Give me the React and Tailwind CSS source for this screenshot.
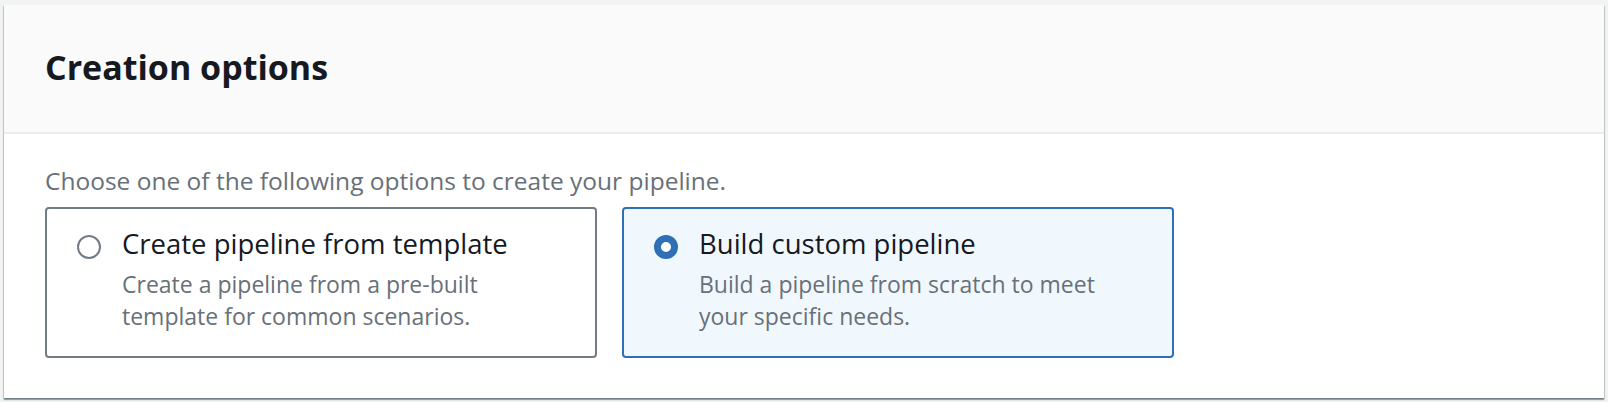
export default function App() {
  return (
    <div className="w-[1608px] h-[402px] bg-[#f2f3f3] pt-[5px] pl-[4px] pr-[4px] font-['Open_Sans',sans-serif]">
      <div className="h-[393px] bg-white flex flex-col shadow-[0_2px_1px_0_rgba(0,28,36,0.35),1px_1px_1px_0_rgba(0,28,36,0.15),-1px_1px_1px_0_rgba(0,28,36,0.15)]">
        <div className="h-[129px] bg-[#fafafa] border-b-2 border-[#eaeded] flex items-center pl-[41px] pb-[3px]">
          <h2 className="text-[34px] leading-[44px] font-bold text-[#16191f]">Creation options</h2>
        </div>
        <div className="pl-[41px] pt-[32px]">
          <p className="text-[24.5px] leading-[30px] text-[#687078]">
            Choose one of the following options to create your pipeline.
          </p>
          <div className="flex gap-[25px] mt-[11px]">
            <Option
              selected={false}
              title="Create pipeline from template"
              lines={["Create a pipeline from a pre-built", "template for common scenarios."]}
            />
            <Option
              selected={true}
              title="Build custom pipeline"
              lines={["Build a pipeline from scratch to meet", "your specific needs."]}
            />
          </div>
        </div>
      </div>
    </div>
  );
}

function Option({ selected, title, lines }) {
  return (
    <div
      className={
        selected
          ? "w-[552px] h-[151px] rounded-[4px] border-2 border-[#2f6fb5] bg-[#f1f8fd] flex pl-[30px] pt-[18px]"
          : "w-[552px] h-[151px] rounded-[4px] border-2 border-[#737c85] bg-white flex pl-[30px] pt-[18px]"
      }
    >
      <div className="pt-[8px]">
        {selected ? (
          <div className="w-[24px] h-[24px] rounded-full border-[7px] border-[#2f6fb5] bg-white" />
        ) : (
          <div className="w-[24px] h-[24px] rounded-full border-2 border-[#737c85] bg-white" />
        )}
      </div>
      <div className="ml-[21px]">
        <div className="text-[27.5px] leading-[34px] text-[#16191f]">{title}</div>
        <div className="mt-[7px] text-[23px] leading-[32px] text-[#687078]">
          {lines.map((l) => (
            <div key={l}>{l}</div>
          ))}
        </div>
      </div>
    </div>
  );
}
